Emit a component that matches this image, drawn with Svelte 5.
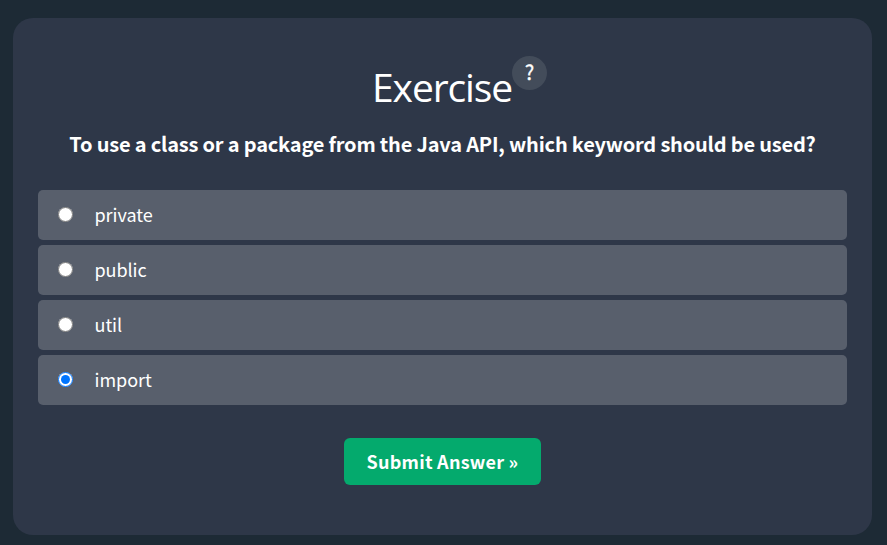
<script>
  const answers = ['private', 'public', 'util', 'import'];
  let selected = $state('import');
</script>

<main>
  <form class="card" onsubmit={(e) => e.preventDefault()}>
    <header>
      <h1>Exercise</h1>
      <button type="button" class="help" aria-label="What is this?"><span>?</span></button>
    </header>
    <p class="question">To use a class or a package from the Java API, which keyword should be used?</p>
    <div class="answers">
      {#each answers as answer}
        <label>
          <input type="radio" name="answer" value={answer} bind:group={selected} />
          <span>{answer}</span>
        </label>
      {/each}
    </div>
    <button type="submit" class="submit">Submit Answer »</button>
  </form>
</main>

<style>
  :global(body) {
    background: #1d2a35;
  }
  main {
    box-sizing: border-box;
    height: 545px;
    padding: 18px 15px 10px 13px;
    overflow: hidden;
  }
  .card {
    box-sizing: border-box;
    height: 517px;
    padding: 38px 25px 0;
    border-radius: 20px;
    background: #2e3748;
    color: #fff;
    font-family: 'Noto Sans CJK SC', sans-serif;
    display: flex;
    flex-direction: column;
    align-items: center;
  }
  header {
    display: flex;
    align-items: flex-start;
    height: 68px;
    margin-left: 34px;
  }
  h1 {
    width: 140px;
    margin: 1px 0 0;
    font: 400 39px/60px 'Open Sans', sans-serif;
    letter-spacing: -1.1px;
    white-space: nowrap;
  }
  .help {
    width: 35px;
    height: 34px;
    padding: 0 0 2px;
    border: 0;
    border-radius: 50%;
    background: #434c5a;
    color: #fff;
    font: 400 20px/32px 'Noto Sans CJK SC', sans-serif;
    -webkit-text-stroke: 0.3px #fff;
  }
  .question {
    margin: 0;
    height: 66px;
    font-size: 20px;
    line-height: 40px;
    font-weight: 700;
    letter-spacing: -0.19px;
    white-space: nowrap;
  }
  .answers {
    width: 809px;
    display: flex;
    flex-direction: column;
    gap: 5px;
  }
  label {
    height: 50px;
    border-radius: 5px;
    background: #585f6c;
    display: flex;
    align-items: center;
    font-size: 18px;
    line-height: 48px;
  }
  label span {
    height: 50px;
    letter-spacing: -0.05px;
  }
  input {
    width: 15px;
    height: 15px;
    margin: 0 21.5px 2px 20px;
  }
  .submit {
    width: 197px;
    height: 47px;
    margin: 33px 0 0;
    padding: 0;
    border: 0;
    border-radius: 6px;
    background: #04aa6d;
    color: #fff;
    font: 700 18px/47px 'Noto Sans CJK SC', sans-serif;
    letter-spacing: 0.25px;
    white-space: nowrap;
  }
</style>
